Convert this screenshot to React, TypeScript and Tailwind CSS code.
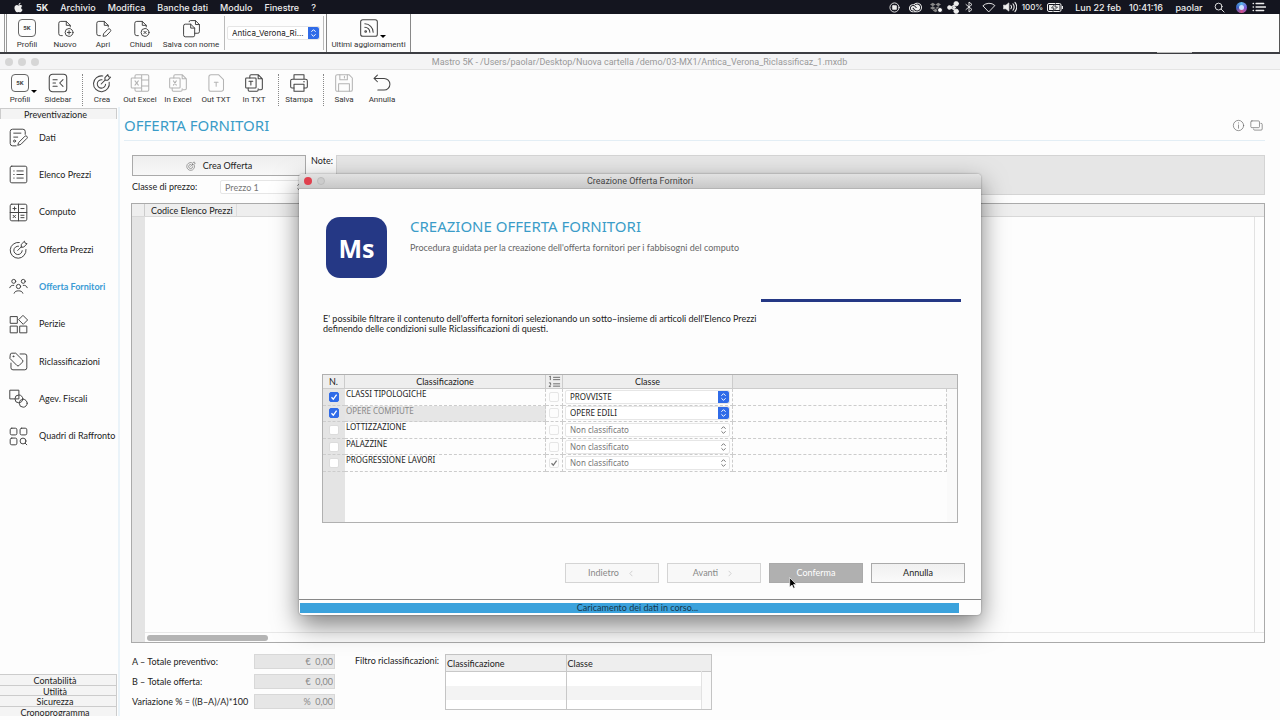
import type { ReactNode } from "react";
import { FaApple, FaDropbox } from "react-icons/fa";
import { SiAdobecreativecloud } from "react-icons/si";

const UI = "font-['Roboto','Liberation_Sans',sans-serif]";
const MENU = "font-['Inter','Liberation_Sans',sans-serif]";
const TITLE = "font-['Noto_Sans','Open_Sans',sans-serif]";

function Svg({ children, className = "size-[19px]" }: { children: ReactNode; className?: string }) {
  return (
    <svg
      viewBox="0 0 24 24"
      fill="none"
      stroke="currentColor"
      strokeWidth="1.25"
      strokeLinecap="round"
      strokeLinejoin="round"
      className={`shrink-0 ${className}`}
      aria-hidden="true"
    >
      {children}
    </svg>
  );
}

const docBody = "M8 21H6a2.500 2.500 0 0 1-2.500-2.500v-13A2.500 2.500 0 0 1 6 3h7l5 5v2M13 3v5h5";

function FiveK() {
  return (
    <span className="flex size-[18px] items-center justify-center rounded-[4px] border border-[#666] text-[6px] leading-none font-bold">
      5K
    </span>
  );
}
const NewDoc = () => (
  <Svg>
    <path d={docBody} />
    <circle cx="16.500" cy="17" r="5" />
    <path d="M16.500 14.800v4.400M14.300 17h4.400" />
  </Svg>
);
const OpenDoc = () => (
  <Svg>
    <path d={docBody} />
    <path d="M12.500 18.200l5-5.200a2 2 0 0 1 3 3l-5 5.200-3.600.6z" />
  </Svg>
);
const CloseDoc = () => (
  <Svg>
    <path d={docBody} />
    <circle cx="16.500" cy="17" r="5" />
    <path d="M15 15.500l3 3M18 15.500l-3 3" />
  </Svg>
);
const CopyDoc = () => (
  <Svg>
    <path d="M9 3.500A1.500 1.500 0 0 1 10.500 2H17l5 5v9a2 2 0 0 1-2 2h-4M17 2v5h5" />
    <path d="M2 8.500a2 2 0 0 1 2-2h7l5 5v9a2 2 0 0 1-2 2H4a2 2 0 0 1-2-2zM11 6.500v5h5" />
  </Svg>
);
const Feed = () => (
  <Svg className="size-[20px]">
    <rect x="2" y="2" width="20" height="20" rx="2.500" />
    <path d="M7 7a10 10 0 0 1 10 10M7 11a6 6 0 0 1 6 6" />
    <circle cx="8" cy="16.200" r="1" />
  </Svg>
);
const SidebarIcon = () => (
  <Svg className="size-[20px]">
    <rect x="1.500" y="1.500" width="21" height="21" rx="4" />
    <path d="M6 8h5M6 12h3M6 16h5M18 8l-4 4 4 4" />
  </Svg>
);
const Target = ({ className = "size-[20px]" }: { className?: string }) => (
  <Svg className={className}>
    <path d="M13 3.600A9.500 9.500 0 1 0 20.600 11" />
    <path d="M12 8.200a5 5 0 1 0 4.300 5.300" />
    <path d="M11 13.200l5-5M15.500 8.800V5.500L19 2l.8 2.400L22.300 5l-3.300 3.600z" />
  </Svg>
);
const OutExcel = () => (
  <Svg className="size-[20px]">
    <path d="M6 6V3.500A1.500 1.500 0 0 1 7.500 2H21a1.500 1.500 0 0 1 1.500 1.500v17A1.500 1.500 0 0 1 21 22H7.500A1.500 1.500 0 0 1 6 20.500V18M14 2v4M14 18v4M14 8.500h8.500M14 15.500h8.500" />
    <rect x="1.500" y="6" width="12.500" height="12" rx="1" />
    <path d="M6 9.500l4 5M10 9.500l-4 5" />
  </Svg>
);
const InDoc = ({ children }: { children: ReactNode }) => (
  <Svg className="size-[20px]">
    <path d="M7 6V3.500A1.500 1.500 0 0 1 8.500 2H17l5 5v11.500a1.500 1.500 0 0 1-1.500 1.500H18M17 2v5h5" />
    <path d="M17 19v1.500a1.500 1.500 0 0 1-1.500 1.500h-9A1.500 1.500 0 0 1 5 20.500V18" />
    <rect x="2" y="6" width="12.500" height="12" rx="1" />
    {children}
  </Svg>
);
const OutTxt = () => (
  <Svg className="size-[20px]">
    <path d="M6 2h9l6 6v11.500a2.500 2.500 0 0 1-2.500 2.500H6a2.500 2.500 0 0 1-2.500-2.500v-15A2.500 2.500 0 0 1 6 2z" />
    <path d="M10 11h4.500M12.200 11v5" />
  </Svg>
);
const Printer = () => (
  <Svg className="size-[20px]">
    <path d="M6 7.500V2h12v5.500M6 18H3.500A1.500 1.500 0 0 1 2 16.500V9.500A2 2 0 0 1 4 7.500h16a2 2 0 0 1 2 2v7a1.500 1.500 0 0 1-1.500 1.500H18" />
    <path d="M6 13.500h12V22H6zM17.500 10.500h1" />
  </Svg>
);
const Floppy = () => (
  <Svg className="size-[20px]">
    <path d="M4 2h14l4 4v14a2 2 0 0 1-2 2H4a2 2 0 0 1-2-2V4a2 2 0 0 1 2-2z" />
    <path d="M7 2v6h9V2M12.500 4v2M5.500 22v-9h13v9" />
  </Svg>
);
const Undo = () => (
  <Svg className="size-[20px]">
    <path d="M6.500 2.500L2.500 6.500l4 4M2.500 6.500h12a7 7 0 0 1 0 14H7" />
  </Svg>
);

function ToolButton({
  label,
  icon,
  width = "w-[38px]",
  disabled = false,
  menu = false,
}: {
  label: string;
  icon: ReactNode;
  width?: string;
  disabled?: boolean;
  menu?: boolean;
}) {
  return (
    <button
      type="button"
      disabled={disabled}
      className={`relative flex shrink-0 flex-col items-center gap-[2px] text-[#444] ${width}`}
    >
      <span className={`flex h-5 items-center ${disabled ? "text-[#b4b4b4]" : ""}`}>{icon}</span>
      <span className="text-[8px] leading-[10px] whitespace-nowrap text-[#333]">{label}</span>
      {menu && (
        <span className="absolute top-[17px] left-1/2 ml-[11px] border-x-[3px] border-t-[3px] border-x-transparent border-t-black" />
      )}
    </button>
  );
}

function Stepper({ active }: { active: boolean }) {
  return (
    <span
      className={`pointer-events-none absolute inset-y-0 right-0 flex w-[11px] items-center justify-center rounded-r-[2px] ${
        active ? "bg-[#2f6be8] text-white" : "text-[#777]"
      }`}
    >
      <svg viewBox="0 0 8 12" className="h-[10px] w-[7px]" fill="none" stroke="currentColor" strokeWidth="1.200" aria-hidden="true">
        <path d="M1.500 4.500L4 2l2.500 2.500M1.500 7.500L4 10l2.500-2.500" />
      </svg>
    </span>
  );
}

function Dropdown({ value, label, active, className }: { value: string; label: string; active: boolean; className: string }) {
  return (
    <span className={`relative block rounded-[2px] border border-[#e6e6e6] bg-white ${className}`}>
      <select
        aria-label={label}
        disabled={!active}
        defaultValue={value}
        className={`block size-full appearance-none truncate bg-transparent pr-3 pl-1 leading-none outline-none disabled:opacity-100 ${
          active ? "text-[#222]" : "text-[#777]"
        }`}
      >
        <option>{value}</option>
      </select>
      <Stepper active={active} />
    </span>
  );
}

function Tick({ label, checked, disabled = false }: { label: string; checked: boolean; disabled?: boolean }) {
  const fill = disabled
    ? "border-[#e6e6e6] bg-[#fdfdfd]"
    : "border-[#dcdcdc] bg-white checked:border-[#2f6be8] checked:bg-[#2f6be8]";
  return (
    <span className="mx-auto grid size-[10px]">
      <input
        type="checkbox"
        aria-label={label}
        defaultChecked={checked}
        disabled={disabled}
        className={`peer col-start-1 row-start-1 size-[10px] appearance-none rounded-[2px] border ${fill}`}
      />
      <svg
        viewBox="0 0 10 10"
        className={`pointer-events-none invisible col-start-1 row-start-1 size-[10px] peer-checked:visible ${
          disabled ? "text-[#777]" : "text-white"
        }`}
        fill="none"
        stroke="currentColor"
        strokeWidth="1.300"
        aria-hidden="true"
      >
        <path d="M2.500 5.300L4.300 7.300L7.600 2.600" />
      </svg>
    </span>
  );
}

function MenuBar() {
  return (
    <header className={`flex h-[14px] shrink-0 items-center justify-between bg-[#14151f] text-[9px] leading-none font-medium whitespace-nowrap text-[#eee] ${MENU}`}>
      <nav className="flex items-center gap-3 pl-[13px]">
        <FaApple className="size-[11px]" />
        <span className="font-bold">5K</span>
        <span>Archivio</span>
        <span>Modifica</span>
        <span>Banche dati</span>
        <span>Modulo</span>
        <span>Finestre</span>
        <span>?</span>
      </nav>
      <div className="flex items-center pr-[14px]">
        <span className="flex w-[21px] justify-center">
          <Svg className="size-[11px]">
            <circle cx="12" cy="12" r="10" strokeWidth="2" />
            <rect x="7.500" y="7.500" width="9" height="9" rx="1.500" fill="currentColor" />
          </Svg>
        </span>
        <span className="flex w-[21px] justify-center">
          <SiAdobecreativecloud className="size-[13px]" />
        </span>
        <span className="relative flex w-[19px] justify-center">
          <FaDropbox className="size-[11px] text-[#888]" />
          <span className="absolute right-[2px] bottom-0 size-[6px] rounded-full border border-[#14151f] bg-white" />
        </span>
        <span className="flex w-[16px] justify-center">
          <Svg className="size-[13px]">
            <path d="M6 12L17 5.500M6 12l11 6.500" strokeWidth="2" />
            <g fill="currentColor">
              <circle cx="4.500" cy="12" r="3.500" />
              <circle cx="17" cy="5" r="4.300" />
              <circle cx="17" cy="19" r="4.300" />
              <circle cx="13" cy="12" r="2.500" />
            </g>
          </Svg>
        </span>
        <span className="flex w-[16px] justify-center">
          <Svg className="size-[12px]">
            <path d="M6 7l12 10-6 5V2l6 5L6 17" strokeWidth="1.800" />
          </Svg>
        </span>
        <span className="flex w-[23px] justify-center">
          <Svg className="size-[14px]">
            <path d="M2 9.500a14.500 14.500 0 0 1 20 0L12 20z" strokeWidth="1.600" />
          </Svg>
        </span>
        <span className="flex w-[20px] justify-center">
          <Svg className="size-[14px]">
            <path d="M1 9h4l5-4v14l-5-4H1z" fill="currentColor" />
            <path d="M13.500 9a5 5 0 0 1 0 6M17 6.500a9 9 0 0 1 0 11M20.500 4a13 13 0 0 1 0 16" strokeWidth="1.800" />
          </Svg>
        </span>
        <span className="w-[25px] text-center text-[8px]">100%</span>
        <span className="flex w-[20px] justify-center">
          <svg viewBox="0 0 32 18" className="h-[9px] w-[16px]" aria-hidden="true">
            <rect x="1" y="1" width="27" height="16" rx="3" fill="none" stroke="#eee" strokeWidth="2" />
            <rect x="4" y="4" width="21" height="10" fill="#eee" />
            <rect x="29.500" y="6" width="2.500" height="6" fill="#eee" />
            <path d="M17 1l-8 9h5l-2 7 9-9h-5z" fill="#eee" stroke="#14151f" strokeWidth="1.500" />
          </svg>
        </span>
        <span className="w-[57px] pr-px text-right">Lun 22 feb</span>
        <span className="w-[48px] text-center">10:41:16</span>
        <span className="w-[38px] text-center">paolar</span>
        <span className="flex w-[22px] justify-center">
          <Svg className="size-[11px]">
            <circle cx="10" cy="10" r="7.500" strokeWidth="2" />
            <path d="M15.500 15.500L22 22" strokeWidth="2" />
          </Svg>
        </span>
        <span className="flex w-[22px] justify-center">
          <span className="flex size-[11px] items-center justify-center rounded-full bg-[conic-gradient(#5ab4e8,#7b5bd6,#d0508a,#3b62c4,#5ab4e8)]">
            <span className="size-[5px] rounded-full bg-[#cfe2ff]" />
          </span>
        </span>
        <Svg className="size-[14px]">
          <path d="M7 6h13M7 12h16M7 18h13M2 6h.5M2 12h.5M2 18h.5" strokeWidth="2.400" />
        </Svg>
      </div>
    </header>
  );
}

function AppToolbar() {
  return (
    <>
      <div className={`flex h-[38px] shrink-0 border-r border-[#555] bg-[#fdfdfd] pl-1 ${UI}`}>
        <div className="flex border-l-[3px] border-double border-[#999] pt-1 pl-px">
          <ToolButton label="Profili" icon={<FiveK />} />
          <ToolButton label="Nuovo" icon={<NewDoc />} />
          <ToolButton label="Apri" icon={<OpenDoc />} />
          <ToolButton label="Chiudi" icon={<CloseDoc />} />
          <ToolButton label="Salva con nome" icon={<CopyDoc />} width="w-[62px]" />
        </div>
        <div className="my-[2px] ml-[2px] flex items-center border-x border-[#bbb] pr-[3px] pl-[2px]">
          <Dropdown value="Antica_Verona_Ri..." label="Documento" active className={`h-[14px] w-[93px] text-[8px] ${MENU}`} />
        </div>
        <div className="ml-[2px] border-x border-[#888] pt-1">
          <ToolButton label="Ultimi aggiornamenti" icon={<Feed />} width="w-[83px]" menu />
        </div>
      </div>
      <div className="flex h-[2px] shrink-0 bg-[#3c3d42] pr-[88px]">
        <span className="ml-auto h-px w-[35px] bg-[#bbb]" />
      </div>
    </>
  );
}

function WindowToolbar() {
  const sep = <span className="mt-px h-[32px] shrink-0 border-l border-dotted border-[#888]" />;
  return (
    <div className={`flex h-[37px] shrink-0 items-start bg-[#fdfdfd] pt-[3px] pl-px ${UI}`}>
      <ToolButton label="Profili" icon={<FiveK />} menu />
      <ToolButton label="Sidebar" icon={<SidebarIcon />} />
      <span className="w-[5px]" />
      {sep}
      <ToolButton label="Crea" icon={<Target />} />
      <ToolButton label="Out Excel" icon={<OutExcel />} disabled />
      <ToolButton
        label="In Excel"
        icon={
          <InDoc>
            <path d="M6.500 9.500l3.500 5M10 9.500l-3.500 5" />
          </InDoc>
        }
        disabled
      />
      <ToolButton label="Out TXT" icon={<OutTxt />} disabled />
      <ToolButton
        label="In TXT"
        icon={
          <InDoc>
            <path d="M6 10h4.500M8.250 10v4.500" />
          </InDoc>
        }
      />
      <span className="w-[5px]" />
      {sep}
      <span className="w-px" />
      <ToolButton label="Stampa" icon={<Printer />} />
      <span className="w-[5px]" />
      {sep}
      <span className="w-px" />
      <ToolButton label="Salva" icon={<Floppy />} disabled />
      <ToolButton label="Annulla" icon={<Undo />} />
    </div>
  );
}

const sections: { label: string; icon: ReactNode; active?: boolean }[] = [
  {
    label: "Dati",
    icon: (
      <>
        <path d="M20.500 8V4.500a3 3 0 0 0-3-3h-13a3 3 0 0 0-3 3v15a3 3 0 0 0 3 3H9M6 6.500h9M6 11.500h5" />
        <circle cx="7" cy="16.500" r="1.300" />
        <path d="M12.500 18l7.500-7.500a1.800 1.800 0 0 1 2.600 2.600L15 20.700l-3.500 1z" />
      </>
    ),
  },
  {
    label: "Elenco Prezzi",
    icon: (
      <>
        <rect x="1.500" y="1.500" width="21" height="21" rx="2" />
        <path d="M10 7.500h8M10 12h8M10 16.500h8M6 7.500h.5M6 12h.5M6 16.500h.5" />
      </>
    ),
  },
  {
    label: "Computo",
    icon: (
      <>
        <rect x="1.500" y="1.500" width="21" height="21" rx="2" />
        <path d="M12 1.500v21M1.500 12h21M7 5v4M5 7h4M15 7h4M5.200 15.500l3 3M8.200 15.500l-3 3M15 15.500h4M15 18.500h4" />
      </>
    ),
  },
  {
    label: "Offerta Prezzi",
    icon: (
      <>
        <path d="M13 3.100A10 10 0 1 0 21.500 12" />
        <path d="M12 7.800a5.300 5.300 0 1 0 4.700 5.700" />
        <path d="M11 13.200l5-5M15.500 8.800V5.500L19.500 1.500l.8 2.400 2.500.8-3.800 3.900z" />
      </>
    ),
  },
  {
    label: "Offerta Fornitori",
    active: true,
    icon: (
      <>
        <circle cx="6" cy="5.500" r="2.500" />
        <circle cx="18" cy="5.500" r="2.500" />
        <circle cx="12" cy="12" r="2.700" />
        <path d="M1 13.500c.5-2.200 2-3 5-3M23 13.500c-.5-2.200-2-3-5-3M6.500 20.500c.8-2.600 3-3 5.500-3s4.700.4 5.500 3" />
      </>
    ),
  },
  {
    label: "Perizie",
    icon: (
      <>
        <rect x="2" y="2" width="8.500" height="8.500" />
        <rect x="2" y="14" width="8.500" height="8.500" />
        <rect x="14" y="14" width="8.500" height="8.500" />
        <path d="M18 .8l5.500 5.500L18 11.800l-5.500-5.500z" />
      </>
    ),
  },
  {
    label: "Riclassificazioni",
    icon: (
      <>
        <path d="M14 2.500h6a2.500 2.500 0 0 1 2.500 2.500v15a2.500 2.500 0 0 1-2.500 2.500H5A2.500 2.500 0 0 1 2.500 20v-6" />
        <path d="M1.500 3.500a2 2 0 0 1 2-2h5l8.500 8.500a2 2 0 0 1 0 2.800l-4.200 4.200a2 2 0 0 1-2.800 0L1.500 8.500z" />
        <circle cx="5.500" cy="5.500" r=".6" />
      </>
    ),
  },
  {
    label: "Agev. Fiscali",
    icon: (
      <>
        <rect x="1.500" y="1.500" width="11" height="11" />
        <circle cx="12.500" cy="12.500" r="5" />
        <circle cx="18" cy="18" r="5" />
      </>
    ),
  },
  {
    label: "Quadri di Raffronto",
    icon: (
      <>
        <rect x="1.500" y="1.500" width="8.500" height="8.500" rx="2" />
        <rect x="14" y="1.500" width="8.500" height="8.500" rx="2" />
        <rect x="1.500" y="14" width="8.500" height="8.500" rx="2" />
        <circle cx="17.700" cy="17.700" r="3.700" />
        <path d="M20.500 20.500l2 2" />
      </>
    ),
  },
];

function Sidebar() {
  return (
    <aside className="flex w-[120px] shrink-0 flex-col border-r-2 border-[#eaf3f9] bg-[#fdfdfd]">
      <button type="button" className="mt-px mr-px h-[11px] border border-b-0 border-[#ccc] bg-[#f4f4f4] pr-[6px] text-center leading-[12px]">
        Preventivazione
      </button>
      <nav className="grid h-84 grid-rows-9">
        {sections.map((s) => (
          <a key={s.label} href="#" className="flex items-center gap-[11px] pl-[9px] whitespace-nowrap">
            <Svg className="size-[19px] text-[#444]">{s.icon}</Svg>
            <span className={s.active ? "font-bold text-[#3a9bd5]" : ""}>{s.label}</span>
          </a>
        ))}
      </nav>
      <div className="mt-auto mr-px grid h-[42px] grid-rows-4">
        {["Contabilità", "Utilità", "Sicurezza", "Cronoprogramma"].map((s) => (
          <button key={s} type="button" className="overflow-hidden border-t border-r border-[#ccc] bg-[#f4f4f4] pr-[6px] text-center leading-[12px]">
            {s}
          </button>
        ))}
      </div>
    </aside>
  );
}

const totals = [
  { id: "tot-a", label: "A – Totale preventivo:", value: "€  0,00" },
  { id: "tot-b", label: "B – Totale offerta:", value: "€  0,00" },
  { id: "var", label: "Variazione % = ((B–A)/A)*100", value: "%  0,00" },
];

function MainPanel() {
  return (
    <main className="flex min-w-0 flex-1 flex-col pr-[15px] pb-[6px] pl-[4px]">
      <div className="flex h-[34px] shrink-0 items-center justify-between border-b border-[#e3eef5] pt-[3px]">
        <h1 className={`text-[15px] leading-5 text-[#3a9cc8] ${TITLE}`}>OFFERTA FORNITORI</h1>
        <div className="flex gap-[5px] pr-[2px] text-[#666]">
          <button type="button" aria-label="Informazioni">
            <Svg className="size-[13px]">
              <circle cx="12" cy="12" r="9.500" />
              <path d="M12 11v6M12 7v.5" />
            </Svg>
          </button>
          <button type="button" aria-label="Finestre">
            <Svg className="size-[13px]">
              <rect x="1.500" y="3.500" width="16" height="12.500" rx="2" />
              <path d="M20 8h.5a2 2 0 0 1 2 2v8.500a2 2 0 0 1-2 2h-12a2 2 0 0 1-2-2" />
            </Svg>
          </button>
        </div>
      </div>

      <div className="mt-[14px] flex pl-2">
        <div className="w-[174px] shrink-0">
          <button type="button" className="flex h-[21px] w-full items-center justify-center gap-[7px] border border-[#aaa] bg-linear-to-b from-[#eee] to-[#f8f8f8]">
            <Target className="size-[10px] text-[#555]" />
            Crea Offerta
          </button>
          <div className="mt-1 flex items-center">
            <span className="w-[88px]">Classe di prezzo:</span>
            <Dropdown value="Prezzo 1" label="Classe di prezzo" active={false} className="h-[14px] flex-1" />
          </div>
        </div>
        <label htmlFor="note" className="w-[30px] shrink-0 pl-[5px] leading-[12px]">
          Note:
        </label>
        <textarea id="note" readOnly className="h-[40px] min-w-0 flex-1 resize-none border border-[#d4d4d4] bg-[#e6e6e6]" />
      </div>

      <div className="mt-2 ml-[7px] flex min-h-0 flex-1 flex-col border border-[#aaa]">
        <div className="flex h-[13px] shrink-0 items-stretch border-b border-[#d8d8d8] bg-[#eee] leading-[13px]">
          <span className="w-[13px] border-r border-[#ccc]" />
          <span className="w-[92px] border-r border-[#ddd] pl-[6px] whitespace-nowrap">Codice Elenco Prezzi</span>
        </div>
        <div className="flex min-h-0 flex-1">
          <div className="w-[13px] bg-[#e4e4e4]" />
          <div className="flex flex-1 flex-col">
            <div className="mr-[9px] flex-1 border-r border-[#e2e2e2]" />
            <div className="flex h-[10px] items-center border-t border-[#e8e8e8] pl-[2px]">
              <span className="h-[6px] w-[121px] rounded-full bg-[#b4b4b4]" />
            </div>
          </div>
        </div>
      </div>

      <div className="mt-[11px] flex h-[56px] shrink-0 pl-2">
        <div className="flex w-[203px] flex-col gap-[5px]">
          {totals.map((t) => (
            <div key={t.id} className="flex h-[15px] items-center justify-between">
              <label htmlFor={t.id} className="whitespace-nowrap">
                {t.label}
              </label>
              <input
                id={t.id}
                readOnly
                value={t.value}
                className="h-[15px] w-[81px] border border-[#d8d8d8] bg-[#e6e6e6] pr-px text-right whitespace-pre text-[#888]"
              />
            </div>
          ))}
        </div>
        <span className="w-[110px] pl-[20px] leading-[13px] whitespace-nowrap">Filtro riclassificazioni:</span>
        <div className="flex h-[56px] w-[267px] flex-col border border-[#c4c4c4] bg-white">
          <table className="w-full table-fixed border-collapse text-left">
            <colgroup>
              <col className="w-[120px]" />
              <col />
              <col className="w-[10px]" />
            </colgroup>
            <thead className="bg-[#eee]">
              <tr className="h-[16px] border-b border-[#c8c8c8]">
                <th className="border-r border-[#c8c8c8] p-0 pt-[2px] pl-px font-normal">Classificazione</th>
                <th className="p-0 pt-[2px] pl-px font-normal" colSpan={2}>
                  Classe
                </th>
              </tr>
            </thead>
            <tbody>
              <tr className="h-[15px]">
                <td className="border-r border-[#c8c8c8]" />
                <td className="border-r border-[#e2e2e2]" />
                <td className="bg-[#fafafa]" />
              </tr>
              <tr className="h-[14px]">
                <td className="border-r border-[#c8c8c8] bg-[#f3f3f3]" />
                <td className="border-r border-[#e2e2e2] bg-[#f3f3f3]" />
                <td className="bg-[#fafafa]" />
              </tr>
              <tr className="h-[9px]">
                <td className="border-r border-[#c8c8c8]" />
                <td className="border-r border-[#e2e2e2]" />
                <td className="bg-[#fafafa]" />
              </tr>
            </tbody>
          </table>
        </div>
      </div>
    </main>
  );
}

const rows = [
  { name: "CLASSI TIPOLOGICHE", on: true, ordered: false, value: "PROVVISTE", dim: false },
  { name: "OPERE COMPIUTE", on: true, ordered: false, value: "OPERE EDILI", dim: true },
  { name: "LOTTIZZAZIONE", on: false, ordered: false, value: "Non classificato", dim: false },
  { name: "PALAZZINE", on: false, ordered: false, value: "Non classificato", dim: false },
  { name: "PROGRESSIONE LAVORI", on: false, ordered: true, value: "Non classificato", dim: false },
];

function FilterTable() {
  const cell = "border-r border-b border-dashed border-[#ccc] p-0";
  return (
    <div className="flex h-[149px] border border-[#b0b0b0]">
      <div className="flex min-w-0 flex-1 flex-col">
        <table className="h-[97px] w-full table-fixed border-separate border-spacing-0">
          <colgroup>
            <col className="w-[22px]" />
            <col className="w-[201px]" />
            <col className="w-[17px]" />
            <col className="w-[170px]" />
            <col />
          </colgroup>
          <thead className="bg-[#eee]">
            <tr className="h-[14px]">
              <th className="border-r border-b border-[#ccc] p-0 font-normal">N.</th>
              <th className="border-r border-b border-[#ccc] p-0 font-normal">Classificazione</th>
              <th className="border-r border-b border-[#ccc] p-0" aria-label="Ordine">
                <svg viewBox="0 0 14 14" className="mx-auto size-[13px] text-[#555]" fill="none" stroke="currentColor" aria-hidden="true">
                  <path d="M5.500 2.500H13M5.500 5H13M5.500 9.500H13M5.500 12H13M1.500 2l1-1v4.500M1 8.500h1.800v2L1.200 12.500H3" strokeWidth=".9" />
                </svg>
              </th>
              <th className="border-r border-b border-[#ccc] p-0 font-normal">Classe</th>
              <th className="border-b border-[#ccc] bg-[#e6e6e6] p-0" />
            </tr>
          </thead>
          <tbody className={`text-[8px] ${TITLE}`}>
            {rows.map((r) => (
              <tr key={r.name}>
                <td className="border-b border-dashed border-[#ccc] bg-[#e4e4e4] p-0">
                  <Tick label={r.name} checked={r.on} />
                </td>
                <td className={`${cell} pl-px align-top leading-[9px] ${r.dim ? "bg-[#e6e6e6] text-[#888]" : ""}`}>{r.name}</td>
                <td className={cell}>
                  <Tick label={`Ordine ${r.name}`} checked={r.ordered} disabled />
                </td>
                <td className={cell}>
                  <Dropdown value={r.value} label={`Classe ${r.name}`} active={r.on} className="mr-[2px] ml-[2px] h-[14px]" />
                </td>
                <td className={cell} />
              </tr>
            ))}
          </tbody>
        </table>
        <div className="w-[22px] flex-1 bg-[#e4e4e4]" />
      </div>
      <div className="w-[10px] bg-[#fafafa]">
        <div className="h-[14px] border-b border-[#ccc] bg-[#e6e6e6]" />
      </div>
    </div>
  );
}

function Chevron({ d }: { d: string }) {
  return (
    <svg viewBox="0 0 4 8" className="h-[7px] w-[4px] text-[#ccc]" fill="none" stroke="currentColor" aria-hidden="true">
      <path d={d} />
    </svg>
  );
}

function WizardDialog() {
  const base = "flex h-[20px] w-[94px] items-center justify-center gap-[10px] border";
  const muted = "border-[#d4d4d4] bg-[#f8f8f8] pr-[3px] text-[#888]";
  return (
    <section
      role="dialog"
      aria-label="Creazione Offerta Fornitori"
      className="flex h-[441px] w-[682px] flex-col overflow-hidden rounded-[4px] bg-[#fdfdfd] shadow-[0_10px_26px_rgba(0,0,0,0.5),0_0_2px_rgba(0,0,0,0.4)]"
    >
      <div className={`relative flex h-[15px] shrink-0 items-center justify-center border-b border-[#b4b4b4] bg-linear-to-b from-[#e2e2e2] to-[#c8c8c8] text-[#444] ${UI}`}>
        <div className="absolute left-[5px] flex gap-[5px]">
          <span className="size-[8px] rounded-full bg-[#e0404e]" />
          <span className="size-[8px] rounded-full border border-[#bbb] bg-[#ccc]" />
        </div>
        Creazione Offerta Fornitori
      </div>

      <div className="flex flex-1 flex-col pr-[16px] pl-6">
        <div className="mt-[28px] flex gap-[23px] pl-[3px]">
          <div className={`flex size-[61px] items-center justify-center rounded-[14px] bg-[#253885] text-[25px] font-bold text-white ${TITLE}`}>Ms</div>
          <div>
            <h2 className={`text-[15px] leading-[18px] text-[#3a9cc8] ${TITLE}`}>CREAZIONE OFFERTA FORNITORI</h2>
            <p className="mt-2 text-[#666]">Procedura guidata per la creazione dell'offerta fornitori per i fabbisogni del computo</p>
          </div>
        </div>
        <div className="mt-[21px] mr-1 h-[3px] w-[200px] self-end bg-[#253885]" />
        <p className="mt-[12px] whitespace-nowrap">
          E' possibile filtrare il contenuto dell'offerta fornitori selezionando un sotto–insieme di articoli dell'Elenco Prezzi
          <br />
          definendo delle condizioni sulle Riclassificazioni di questi.
        </p>
        <div className="mt-[40px] mr-[7px] -ml-px">
          <FilterTable />
        </div>
        <div className="mt-[40px] flex justify-end gap-2">
          <button type="button" disabled className={`${base} ${muted}`}>
            Indietro <Chevron d="M3.500 1L.7 4l2.800 3" />
          </button>
          <button type="button" disabled className={`${base} ${muted}`}>
            Avanti <Chevron d="M.5 1l2.800 3L.5 7" />
          </button>
          <button type="button" className={`${base} border-[#aaa] bg-[#b0b0b0] text-white`}>
            Conferma
          </button>
          <button type="button" className={`${base} border-[#aaa] bg-linear-to-b from-[#f0f0f0] to-[#fafafa]`}>
            Annulla
          </button>
        </div>
      </div>

      <div className="h-[16px] shrink-0 border-t border-[#888] pt-[3px] pl-px">
        <div role="progressbar" aria-label="Caricamento" aria-valuenow={97} className="flex h-[10px] w-[659px] bg-[#3ba2dc]">
          <span className="w-full pl-[16px] text-center leading-[10px] text-[#16364a]">Caricamento dei dati in corso...</span>
        </div>
      </div>
    </section>
  );
}

export default function App() {
  return (
    <div className="relative flex h-screen flex-col overflow-hidden bg-[#fdfdfd] font-['Lato','Noto_Sans',sans-serif] text-[9px] leading-[10px] text-[#222]">
      <MenuBar />
      <AppToolbar />
      <div className={`flex h-[16px] shrink-0 items-center border-b border-[#e4e4e4] bg-[#f4f4f5] pr-[40px] pl-[5px] text-[#999] ${UI}`}>
        <div className="flex gap-[5px]">
          <span className="size-[8px] rounded-full bg-[#d6d6d6]" />
          <span className="size-[8px] rounded-full bg-[#d6d6d6]" />
          <span className="size-[8px] rounded-full bg-[#d6d6d6]" />
        </div>
        <span className="flex-1 text-center">Mastro 5K - /Users/paolar/Desktop/Nuova cartella /demo/03-MX1/Antica_Verona_Riclassificaz_1.mxdb</span>
      </div>
      <WindowToolbar />
      <div className="flex min-h-0 flex-1 pb-1">
        <Sidebar />
        <MainPanel />
      </div>

      <div className="pointer-events-none absolute inset-0 flex items-start justify-center pt-[174px]">
        <div className="pointer-events-auto relative">
          <WizardDialog />
          <svg viewBox="0 0 12 18" className="absolute top-[403px] left-[490px] h-[12px] w-[8px]" aria-hidden="true">
            <path d="M1 1v14l3.500-3 2.200 5 2.300-1-2.200-4.800H11z" fill="#000" stroke="#fff" strokeWidth="1" />
          </svg>
        </div>
      </div>
    </div>
  );
}
